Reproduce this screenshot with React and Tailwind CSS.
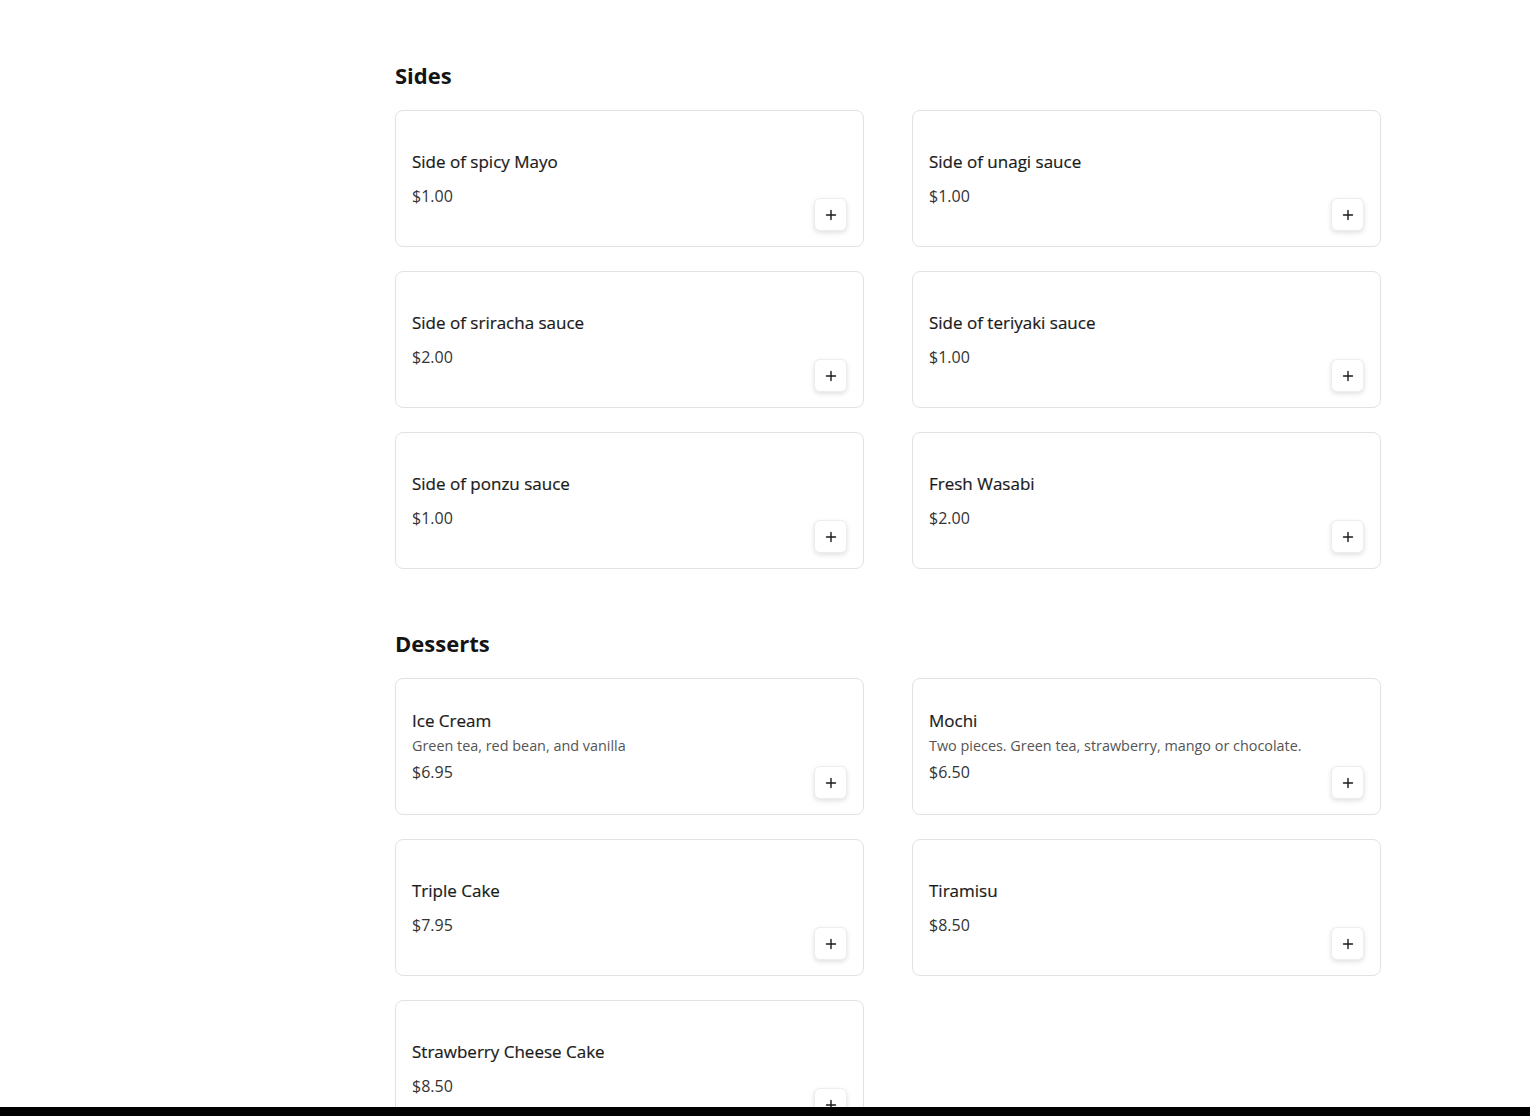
import React from 'react'

const sections = [
  {
    title: 'Sides',
    items: [
      { name: 'Side of spicy Mayo', price: '$1.00' },
      { name: 'Side of unagi sauce', price: '$1.00' },
      { name: 'Side of sriracha sauce', price: '$2.00' },
      { name: 'Side of teriyaki sauce', price: '$1.00' },
      { name: 'Side of ponzu sauce', price: '$1.00' },
      { name: 'Fresh Wasabi', price: '$2.00' },
    ],
  },
  {
    title: 'Desserts',
    items: [
      { name: 'Ice Cream', desc: 'Green tea, red bean, and vanilla', price: '$6.95' },
      { name: 'Mochi', desc: 'Two pieces. Green tea, strawberry, mango or chocolate.', price: '$6.50' },
      { name: 'Triple Cake', price: '$7.95' },
      { name: 'Tiramisu', price: '$8.50' },
      { name: 'Strawberry Cheese Cake', price: '$8.50' },
    ],
  },
]

const PlusIcon = () => (
  <svg width="12" height="12" viewBox="0 0 12 12" fill="none">
    <path d="M6 1.5v9M1.5 6h9" stroke="#1a1a1a" strokeWidth="1.4" strokeLinecap="round" />
  </svg>
)

const ItemCard = ({ item }) => (
  <div className="flex h-[137px] items-end justify-between rounded-lg border border-[#e2e2e2] bg-white pl-4 pr-[16px] pb-[15px]">
    <div className="flex flex-col justify-center self-stretch pt-[15px]">
      <p className="text-[17px] leading-6 font-medium text-[#1a1a1a] [-webkit-text-stroke:0.2px_#1a1a1a]">{item.name}</p>
      {item.desc && <p className="mt-[3px] text-[14.4px] leading-5 text-[#555]">{item.desc}</p>}
      <p className={`${item.desc ? 'mt-1' : 'mt-2.5'} text-[16px] leading-6 text-[#333]`}>{item.price}</p>
    </div>
    <button className="flex h-[33px] w-[33px] items-center justify-center rounded-md border border-[#ededed] bg-white shadow-[0_2px_5px_rgba(0,0,0,0.12)]">
      <PlusIcon />
    </button>
  </div>
)

export default function App() {
  return (
    <div className="min-h-screen bg-white font-['Open_Sans',sans-serif]">
      <div className="ml-[395px] w-[986px] pt-[59px] pb-10">
        {sections.map((section) => (
          <section key={section.title} className="mb-[58px]">
            <h2 className="mb-[19px] text-[22px] leading-8 font-bold text-[#141414]">{section.title}</h2>
            <div className="grid grid-cols-2 gap-x-12 gap-y-6">
              {section.items.map((item) => (
                <ItemCard key={item.name} item={item} />
              ))}
            </div>
          </section>
        ))}
      </div>
      <div className="fixed bottom-0 left-0 right-0 h-[9px] bg-black" />
    </div>
  )
}
